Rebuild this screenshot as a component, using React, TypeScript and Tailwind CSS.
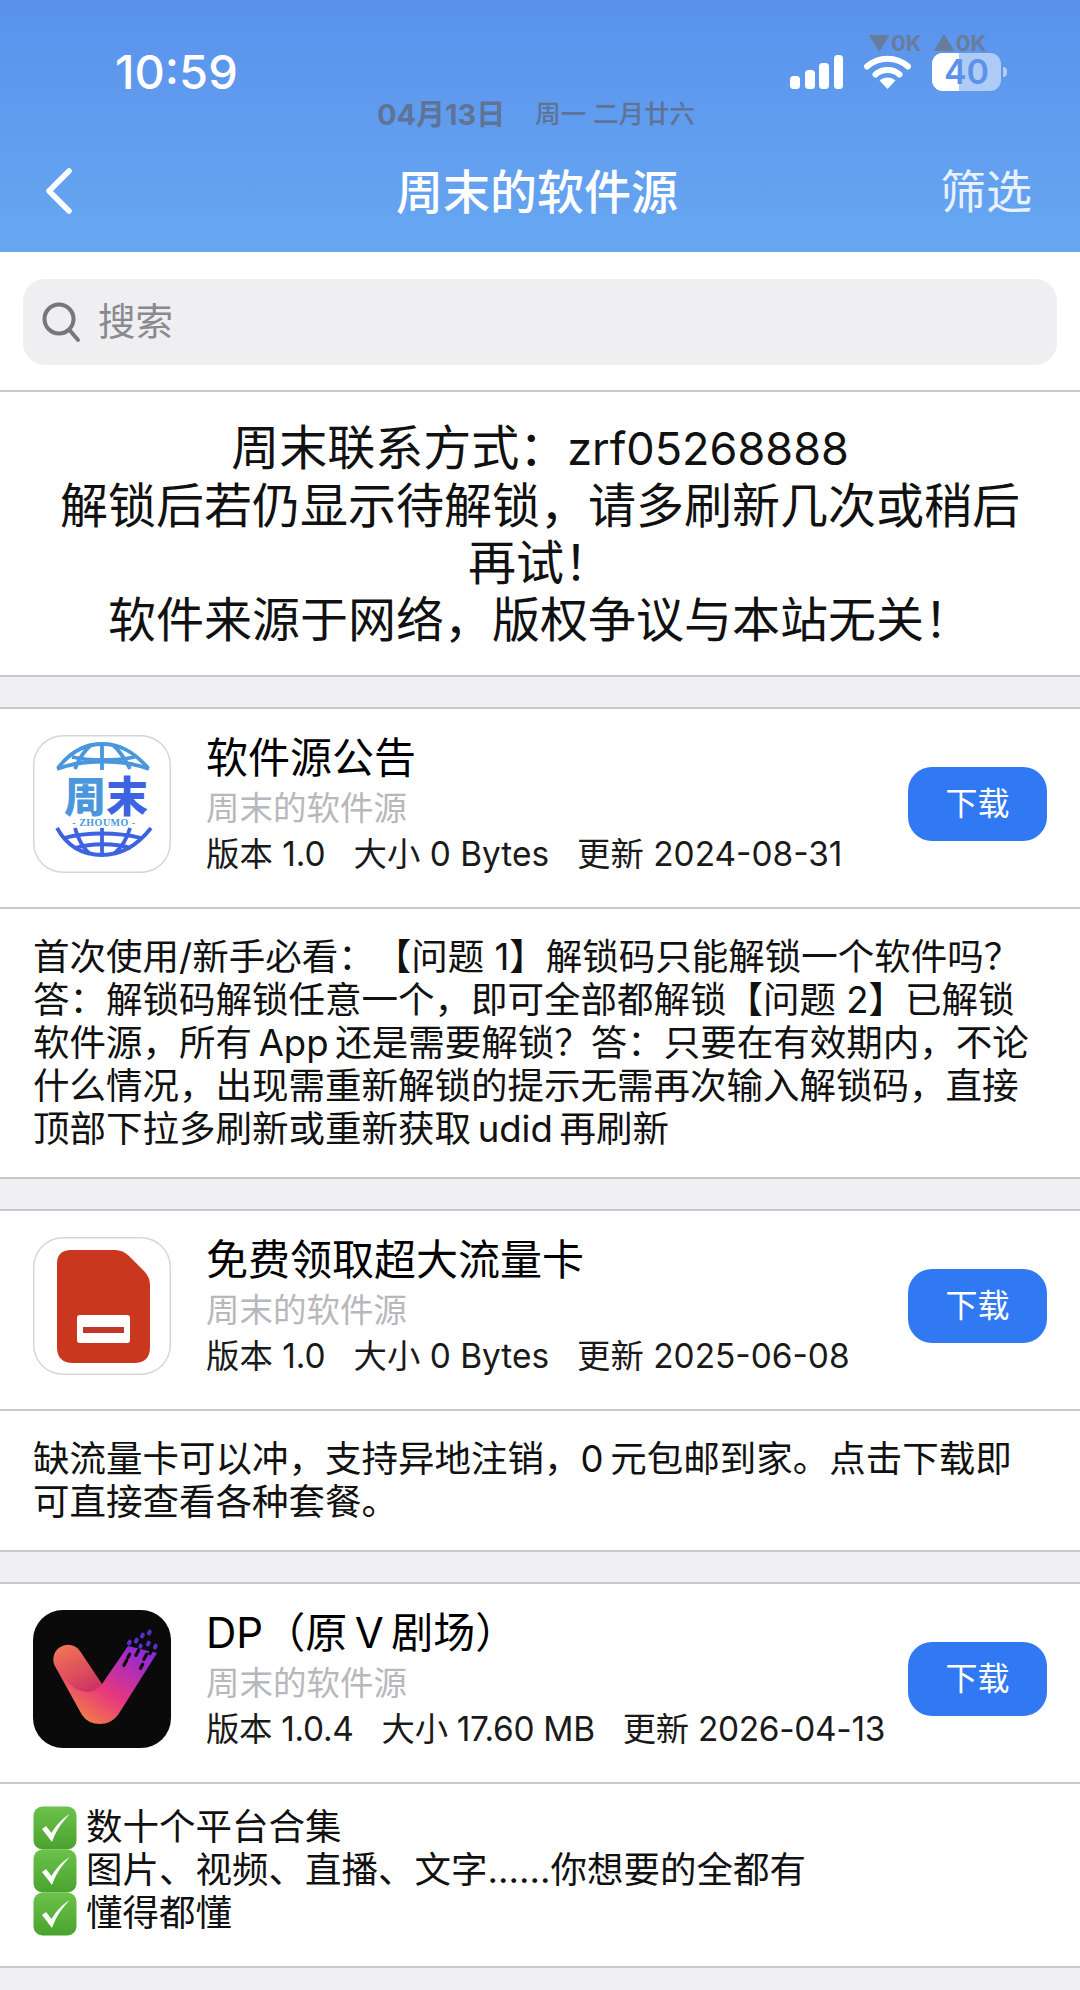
import React from "react";

const FONT = "font-['Inter','Noto_Sans_CJK_SC',sans-serif]";

function SignalIcon() {
  return (
    <svg width="53" height="34" viewBox="0 0 53 34" className="block">
      <rect x="0" y="21" width="10" height="13" rx="3.5" fill="#fff" />
      <rect x="15" y="15" width="10" height="19" rx="3.5" fill="#fff" />
      <rect x="29" y="8" width="10" height="26" rx="3.5" fill="#fff" />
      <rect x="44" y="0" width="9" height="34" rx="3.5" fill="#fff" />
    </svg>
  );
}

function WifiIcon() {
  return (
    <svg width="47" height="34" viewBox="0 0 47 34" className="block">
      <path d="M3 11.5C14.5 1 32.5 1 44 11.5" fill="none" stroke="#fff" strokeWidth="6" strokeLinecap="round" />
      <path d="M11.5 19.5C18 13.5 29 13.5 35.5 19.5" fill="none" stroke="#fff" strokeWidth="6" strokeLinecap="round" />
      <path d="M15.5 25.5C20 21.5 27 21.5 31.5 25.5L23.5 34Z" fill="#fff" />
    </svg>
  );
}

function Battery() {
  return (
    <div className="flex items-center gap-[2px]">
      <div className="relative h-[38px] w-[69px] rounded-[11px] bg-white/50">
        <div className="h-full w-[27px] rounded-l-[11px] bg-white" />
        <div className="absolute inset-0 flex items-center justify-center text-[34px] font-semibold leading-none text-[#5b93ec]">
          40
        </div>
      </div>
      <div className="h-[10px] w-[4px] rounded-r-full bg-white/50" />
    </div>
  );
}

function GlobeLogo() {
  const blue = "#4a97dc";
  const deep = "#3d63e0";
  return (
    <svg width="138" height="138" viewBox="0 0 138 138" className="block">
      <g fill="none" stroke={blue} strokeWidth="3.8">
        <path d="M25 33C38 16 52 9 69 9C86 9 100 16 115 33" />
        <path d="M39 22C56 26 84 26 102 22" />
        <path d="M24 34C50 24 90 24 116 34" />
        <path d="M69 9V35" />
        <path d="M58 10C50 17 45 26 42 34" />
        <path d="M80 10C88 17 93 26 97 34" />
      </g>
      <g fill="none" stroke={deep} strokeWidth="3.8">
        <path d="M24 93C34 111 50 120 69 120C88 120 104 111 118 93" />
        <path d="M31 103C54 97 84 97 108 103" />
        <path d="M42 113C58 108 82 108 98 113" />
        <path d="M69 93V120" />
        <path d="M42 93C45 104 50 113 57 119" />
        <path d="M97 93C94 104 88 113 81 119" />
      </g>
      <text x="31" y="77" fontSize="42" fontWeight="900" fill={blue} fontFamily="'Noto Sans CJK SC',sans-serif">周</text>
      <text x="73" y="77" fontSize="42" fontWeight="900" fill={deep} fontFamily="'Noto Sans CJK SC',sans-serif">末</text>
      <text x="71" y="90.5" fontSize="10" fontWeight="700" textAnchor="middle" letterSpacing="0.5" fill={blue} fontFamily="'Liberation Serif',serif">- ZHOUMO -</text>
    </svg>
  );
}

function SimLogo() {
  return (
    <svg width="138" height="138" viewBox="0 0 138 138" className="block">
      <path d="M38 13H82Q90 13 96 19L111 34Q117 40 117 48V110Q117 126 101 126H40Q24 126 24 110V27Q24 13 38 13Z" fill="#c9371f" />
      <rect x="44" y="78" width="53" height="28" rx="3" fill="#fff" />
      <rect x="50" y="90" width="41" height="6" fill="#c1382a" />
    </svg>
  );
}

function VLogo() {
  return (
    <svg width="138" height="138" viewBox="0 0 138 138" className="block">
      <defs>
        <linearGradient id="vr" x1="0.15" y1="1" x2="0.95" y2="0.1">
          <stop offset="0" stopColor="#f2903a" />
          <stop offset="0.45" stopColor="#e8377c" />
          <stop offset="1" stopColor="#8a28dc" />
        </linearGradient>
        <linearGradient id="vl" x1="0.2" y1="0" x2="0.7" y2="1">
          <stop offset="0" stopColor="#f27556" />
          <stop offset="1" stopColor="#cf3362" />
        </linearGradient>
      </defs>
      <path d="M23 58L49 105Q55 114 67 114Q78 114 85 105L124 43L95 36L69 74L40 60Z" fill="url(#vr)" />
      <path d="M23 58A14.5 14.5 0 0 1 47 41L69 74Q62 83 52 82Q40 79 33 70Z" fill="url(#vl)" />
      <g fill="#0a0a0a">
        <rect x="93" y="48" width="3.2" height="9" rx="1.6" transform="rotate(28 93 48)" />
        <rect x="96" y="42" width="3.2" height="7" rx="1.6" transform="rotate(28 96 42)" />
        <rect x="105" y="38" width="3.2" height="9" rx="1.6" transform="rotate(28 105 38)" />
        <rect x="113" y="42" width="3.2" height="9" rx="1.6" transform="rotate(28 113 42)" />
        <rect x="118" y="38" width="3.2" height="7" rx="1.6" transform="rotate(28 118 38)" />
        <rect x="109" y="52" width="3.2" height="8" rx="1.6" transform="rotate(28 109 52)" />
      </g>
      <g fill="#5a2fc8">
        <rect x="96" y="29" width="4" height="6" rx="2" transform="rotate(28 96 29)" />
        <rect x="103" y="27" width="4" height="6" rx="2" transform="rotate(28 103 27)" />
        <rect x="109" y="22" width="4" height="6" rx="2" transform="rotate(28 109 22)" />
        <rect x="116" y="19" width="4" height="6" rx="2" transform="rotate(28 116 19)" />
        <rect x="115" y="30" width="4" height="6" rx="2" transform="rotate(28 115 30)" />
        <rect x="122" y="33" width="4" height="6" rx="2" transform="rotate(28 122 33)" />
        <rect x="107" y="33" width="4" height="5" rx="2" transform="rotate(28 107 33)" />
      </g>
    </svg>
  );
}

function CheckEmoji() {
  return (
    <svg width="44" height="44" viewBox="0 0 44 44" className="block shrink-0">
      <defs>
        <linearGradient id="cg" x1="0" y1="0" x2="0" y2="1">
          <stop offset="0" stopColor="#6cc24a" />
          <stop offset="1" stopColor="#49a32f" />
        </linearGradient>
      </defs>
      <rect x="0.5" y="0.5" width="43" height="43" rx="9" fill="url(#cg)" />
      <path d="M9 23L19 36C23 25 28 17 37 8C28 13 22 21 18.5 27L13 20Z" fill="#fff" />
    </svg>
  );
}

type Item = {
  name: string;
  version: string;
  size: string;
  date: string;
  icon: React.ReactNode;
  dark?: boolean;
  desc: React.ReactNode;
};

const items: Item[] = [
  {
    name: "软件源公告",
    version: "1.0",
    size: "0 Bytes",
    date: "2024-08-31",
    icon: <GlobeLogo />,
    desc: (
      <p>
        首次使用/新手必看：【问题 1】解锁码只能解锁一个软件吗？答：解锁码解锁任意一个，即可全部都解锁【问题 2】已解锁软件源，所有{"\u2009"}App{"\u2009"}还是需要解锁？答：只要在有效期内，不论什么情况，出现需重新解锁的提示无需再次输入解锁码，直接顶部下拉多刷新或重新获取{"\u2009"}udid{"\u2009"}再刷新
      </p>
    ),
  },
  {
    name: "免费领取超大流量卡",
    version: "1.0",
    size: "0 Bytes",
    date: "2025-06-08",
    icon: <SimLogo />,
    desc: <p>缺流量卡可以冲，支持异地注销，0{"\u2009"}元包邮到家。点击下载即可直接查看各种套餐。</p>,
  },
  {
    name: "DP（原\u2009V\u2009剧场）",
    version: "1.0.4",
    size: "17.60 MB",
    date: "2026-04-13",
    icon: <VLogo />,
    dark: true,
    desc: (
      <div className="-mt-[5px] flex flex-col pb-[5px]">
        {["数十个平台合集", "图片、视频、直播、文字......你想要的全都有", "懂得都懂"].map((t) => (
          <div key={t} className="flex h-[43px] items-center gap-[9px]">
            <CheckEmoji />
            <span>{t}</span>
          </div>
        ))}
      </div>
    ),
  },
];

function AppCard({ item }: { item: Item }) {
  return (
    <section className="mt-[30px] border-y-[2px] border-[#c9c9cc] bg-white">
      <div className="flex items-center pb-[32px] pl-[33px] pr-[33px] pt-[24px]">
        <div
          className={`h-[138px] w-[138px] shrink-0 overflow-hidden rounded-[30px] ${
            item.dark ? "bg-[#0a0a0a]" : "bg-white shadow-[inset_0_0_0_1.5px_#d6d6d6]"
          }`}
        >
          {item.icon}
        </div>
        <div className="ml-[35px] flex min-w-0 flex-1 flex-col">
          <div className="text-[42px] leading-[50px] text-black">{item.name}</div>
          <div className="text-[33.5px] leading-[50px] text-[#b8b8bc]">周末的软件源</div>
          <div
            className={`flex gap-[28px] whitespace-nowrap text-[33.4px] leading-[42px] text-[#1a1a1a] ${
              item.dark ? "tracking-[-0.3px]" : ""
            }`}
          >
            <span>版本 {item.version}</span>
            <span>大小 {item.size}</span>
            <span>更新 {item.date}</span>
          </div>
        </div>
        <button className="flex h-[74px] w-[139px] shrink-0 items-center justify-center rounded-[24px] bg-[#3079f3] text-[32px] text-white">
          下载
        </button>
      </div>
      <div className="border-t-[2px] border-[#c9c9cc] pb-[26px] pl-[33px] pr-[44px] pt-[27px] text-[36.5px] leading-[43px] text-[#111] [text-spacing-trim:space-all]">
        {item.desc}
      </div>
    </section>
  );
}

export default function App() {
  return (
    <div className={`${FONT} min-h-[1990px] w-[1080px] overflow-hidden bg-[#efeff4]`}>
      <header className="flex h-[252px] flex-col bg-gradient-to-b from-[#5a92ec] to-[#67a7f1]">
        <div className="flex h-[99px] items-center pl-[115px] pr-[73px] pt-[44px]">
          <span className="text-[47px] font-medium leading-[56px] text-white">10:59</span>
          <div className="ml-auto flex items-center">
            <SignalIcon />
            <div className="relative ml-[21px] mr-[21px]">
              <WifiIcon />
              <div className="absolute left-[4px] top-[-24px] flex gap-[11px] whitespace-nowrap text-[22px] font-bold leading-[24px] text-[#6a7c9c]">
                <span>▼0K</span>
                <span>▲0K</span>
              </div>
            </div>
            <Battery />
          </div>
        </div>
        <div className="flex h-[30px] items-center justify-center pr-[8px] text-[#5f7396]">
          <span className="text-[29px] font-bold leading-none">04月13日</span>
          <span className="ml-[30px] text-[25.5px] font-medium leading-none">周一 二月廿六</span>
        </div>
        <nav className="mt-[24px] grid h-[76px] grid-cols-[1fr_auto_1fr] items-center pl-[42px] pr-[48px] text-white">
          <svg width="34" height="46" viewBox="0 0 34 46" className="block">
            <path d="M27 3L7 23L27 43" fill="none" stroke="#fff" strokeWidth="5.5" strokeLinecap="round" strokeLinejoin="round" />
          </svg>
          <h1 className="text-[47px] font-medium leading-none">周末的软件源</h1>
          <span className="justify-self-end text-[46px] leading-none text-white/85">筛选</span>
        </nav>
      </header>

      <div className="h-[140px] border-b-[2px] border-[#c9c9cc] bg-white px-[23px] pt-[27px]">
        <div className="flex h-[86px] items-center rounded-[22px] bg-[#efeff2] pl-[18px]">
          <svg width="40" height="42" viewBox="0 0 40 42" className="block" fill="none" stroke="#77777b" strokeWidth="4" strokeLinecap="round">
            <circle cx="18" cy="18" r="14.5" />
            <path d="M28.5 29L37 39" />
          </svg>
          <span className="ml-[17px] text-[37.5px] leading-none text-[#8a8a8e]">搜索</span>
        </div>
      </div>

      <div className="border-b-[2px] border-[#c9c9cc] bg-white px-[50px] py-[27px] text-center text-[48px] leading-[57px] text-[#111] [text-spacing-trim:space-all]">
        <div>
          周末联系方式：<span className="text-[45px]">zrf05268888</span>
        </div>
        <div>解锁后若仍显示待解锁，请多刷新几次或稍后再试！</div>
        <div>软件来源于网络，版权争议与本站无关！</div>
      </div>

      {items.map((item) => (
        <AppCard key={item.name} item={item} />
      ))}
    </div>
  );
}
